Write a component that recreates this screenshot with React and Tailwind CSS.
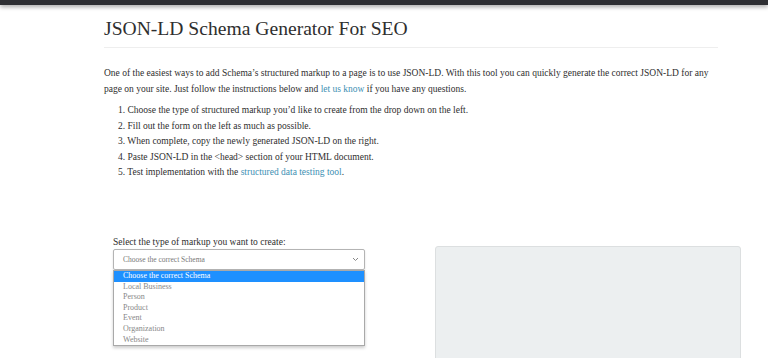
import React from 'react';

const options = ['Local Business', 'Person', 'Product', 'Event', 'Organization', 'Website'];

const steps = [
  <>Choose the type of structured markup you’d like to create from the drop down on the left.</>,
  <>Fill out the form on the left as much as possible.</>,
  <>When complete, copy the newly generated JSON-LD on the right.</>,
  <>Paste JSON-LD in the &lt;head&gt; section of your HTML document.</>,
  <>
    Test implementation with the <a className="text-[#3d8fb3]">structured data testing tool</a>.
  </>,
];

export default function App() {
  return (
    <div className="w-[768px] h-[358px] overflow-hidden bg-white text-[#2e2e2e] font-['Liberation_Serif',serif]">
      {/* Top bar */}
      <div className="h-[5px] bg-[#2e2f33] shadow-[0_2px_4px_rgba(0,0,0,0.35)]" />

      <div className="ml-[104px] w-[614px]">
        <h1 className="pt-[11px] pb-[5px] text-[19.6px] leading-[26px] border-b border-[#eeeeee]">
          JSON-LD Schema Generator For SEO
        </h1>

        <p className="mt-[17px] text-[9.5px] leading-[16px] whitespace-nowrap">
          One of the easiest ways to add Schema’s structured markup to a page is to use JSON-LD. With this tool you can quickly generate the correct JSON-LD for any
          <br />
          page on your site. Just follow the instructions below and <a className="text-[#3d8fb3]">let us know</a> if you have any questions.
        </p>

        <ol className="mt-[6px] pl-[14px] text-[9.5px] leading-[15.6px]">
          {steps.map((s, i) => (
            <li key={i}>
              {i + 1}. {s}
            </li>
          ))}
        </ol>
      </div>

      <div className="mt-[55px] ml-[113px] flex items-start">
        <div className="w-[252px]">
          <label className="block text-[9.5px] leading-[12px]">
            Select the type of markup you want to create:
          </label>
          <div className="mt-[1px] relative">
            <div className="h-[21px] border border-[#b4b4b4] rounded-[2px] shadow-[0_1px_2px_rgba(0,0,0,0.15)] flex items-center justify-between pl-[9px] pr-[5px] text-[7.5px] text-[#777]">
              <span>Choose the correct Schema</span>
              <svg width="7" height="5" viewBox="0 0 7 5" fill="none" stroke="#888" strokeWidth="1">
                <path d="M1 1l2.5 2.5L6 1" />
              </svg>
            </div>
            <div className="border border-[#a9a9a9] bg-white shadow-[0_2px_3px_rgba(0,0,0,0.2)] text-[8px] leading-[10.6px] text-[#888]">
              <div className="bg-[#1e90ff] text-white pl-[9px]">Choose the correct Schema</div>
              {options.map((o) => (
                <div key={o} className="pl-[9px]">
                  {o}
                </div>
              ))}
            </div>
          </div>
        </div>

        <div className="ml-[70px] mt-[10px] w-[306px] h-[120px] bg-[#eceff0] border border-[#dcdfe0] rounded-[3px]" />
      </div>
    </div>
  );
}
